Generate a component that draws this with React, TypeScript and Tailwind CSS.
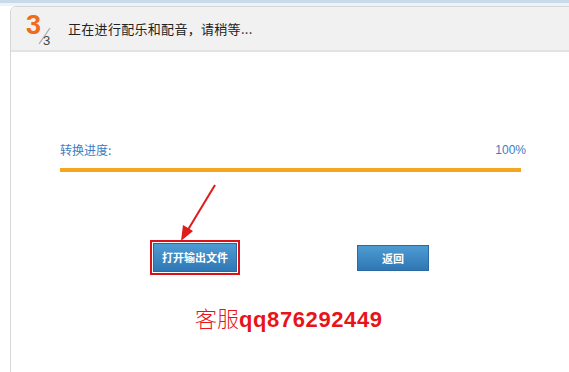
import React from "react";

export default function App() {
  return (
    <div className="w-[569px] h-[372px] overflow-hidden bg-white relative" style={{ fontFamily: '"Noto Sans CJK SC", "Liberation Sans", sans-serif' }}>
      <div className="h-[3px] bg-[#c7dbea]" />
      <div className="h-[3px] bg-[#eef3f7]" />
      <div className="ml-[10px] w-[570px] h-[370px] border border-[#d6d6d6] rounded-tl-[6px] flex flex-col">
        <div className="h-[45px] bg-[#f1f1f1] border-b-2 border-[#e3e3e3] rounded-tl-[6px] flex items-center">
          <div className="relative w-[40px] h-[40px] ml-[13px]">
            <span className="absolute left-[2px] top-[3px] text-[#f26a1b] text-[27px] font-bold leading-none" style={{ fontFamily: '"Liberation Sans", Arial, sans-serif' }}>3</span>
            <svg className="absolute left-[13px] top-[18px]" width="16" height="18" viewBox="0 0 16 18">
              <line x1="13" y1="1" x2="2" y2="17" stroke="#aaaaaa" strokeWidth="1.2" />
            </svg>
            <span className="absolute left-[19px] top-[25px] text-[#444] text-[13px] leading-none" style={{ fontFamily: '"Liberation Sans", Arial, sans-serif' }}>3</span>
          </div>
          <span className="ml-[4px] mt-[1px] text-[13px] text-[#222] tracking-[0.3px]">正在进行配乐和配音，请稍等...</span>
        </div>
        <div className="pl-[49px] w-[515px] pt-[92px]">
          <div className="flex justify-between items-end text-[12px] text-[#3b7dc3] leading-none">
            <span>转换进度:</span>
            <span style={{ fontFamily: '"Liberation Sans", Arial, sans-serif' }}>100%</span>
          </div>
          <div className="mt-[12px] h-[4px] w-[461px] bg-[#f5a51e]" />
        </div>
        <div className="relative flex mt-[68px] pl-[139px]">
          <div className="border-2 border-[#d9121a] p-[1px]">
            <div className="w-[84px] h-[29px] bg-gradient-to-b from-[#4e9bd3] to-[#2f77b4] border border-[#2a6aa1] flex items-center justify-center text-white text-[11px] font-bold">打开输出文件</div>
          </div>
          <div className="ml-[117px] mt-[5px] w-[72px] h-[26px] bg-gradient-to-b from-[#4e9bd3] to-[#2f77b4] border border-[#2a6aa1] flex items-center justify-center text-white text-[11px] font-bold">返回</div>
          <svg className="absolute left-[160px] top-[-57px]" width="50" height="62" viewBox="0 0 50 62">
            <line x1="44" y1="2" x2="15" y2="50" stroke="#e01b1b" strokeWidth="2" />
            <polygon points="10,58 12,42 22,48" fill="#e01b1b" />
          </svg>
        </div>
        <div className="mt-[31px] pl-[184px] flex items-baseline text-[#e8141a] leading-none">
          <span className="text-[22px]" style={{ fontFamily: '"Noto Sans CJK SC", serif', fontWeight: 300 }}>客服</span>
          <span className="text-[22px] font-bold tracking-[0.6px]" style={{ fontFamily: '"Liberation Sans", Arial, sans-serif' }}>qq876292449</span>
        </div>
      </div>
    </div>
  );
}
